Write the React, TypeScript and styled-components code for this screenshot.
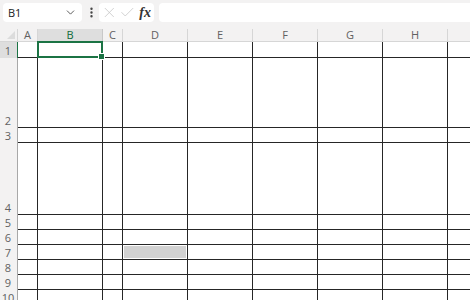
import React from 'react';
import styled, { createGlobalStyle } from 'styled-components';
import { ChevronDown, EllipsisVertical, X, Check } from 'lucide-react';

const GlobalStyle = createGlobalStyle`
  html, body {
    margin: 0;
    padding: 0;
    background: #ffffff;
    font-family: 'Open Sans', 'Noto Sans', 'Liberation Sans', sans-serif;
  }
`;

const Window = styled.div`
  width: 470px;
  height: 300px;
  overflow: hidden;
  background: #f3f2f2;
  display: flex;
  flex-direction: column;
`;

const FormulaBar = styled.div`
  height: 29px;
  flex-shrink: 0;
  display: flex;
  align-items: flex-start;
  padding: 3px 0 0 3px;
  box-sizing: border-box;
`;

const NameBox = styled.div`
  width: 79px;
  height: 19px;
  background: #ffffff;
  border-radius: 4px;
  display: flex;
  align-items: center;
  justify-content: space-between;
  padding: 0 5px 0 5px;
  box-sizing: border-box;
  font-size: 11px;
  color: #222;
`;

const Dots = styled.div`
  width: 16px;
  height: 19px;
  display: flex;
  align-items: center;
  justify-content: center;
  color: #444;
  margin-left: 1px;
`;

const ActionBox = styled.div`
  width: 55px;
  height: 19px;
  background: #ffffff;
  border-radius: 4px;
  display: flex;
  align-items: center;
  padding: 0 3px 0 2px;
  box-sizing: border-box;
  gap: 1px;
  color: #c4c4c4;
`;

const Fx = styled.span`
  font-family: 'Liberation Serif', 'DejaVu Serif', serif;
  font-style: italic;
  font-size: 14px;
  font-weight: 600;
  color: #333;
  margin-left: 3px;
`;

const FormulaInput = styled.div`
  flex: 1;
  height: 19px;
  margin-left: 5px;
  background: #ffffff;
  border-radius: 4px 0 0 4px;
`;

const Sheet = styled.div`
  flex-shrink: 0;
  display: grid;
  grid-template-columns: 18px 20px 65px 20px 65px 65px 65px 65px 65px 65px;
  grid-template-rows: 13px 16px 70px 15px 72px 15px 15px 15px 15px 15px 15px;
  background: #ffffff;
`;

const Corner = styled.div`
  background: #f3f2f2;
  border-right: 1px solid #d6d6d6;
  border-bottom: 1px solid #d6d6d6;
  position: relative;
  &::after {
    content: '';
    position: absolute;
    right: 2px;
    bottom: 2px;
    border-left: 8px solid transparent;
    border-bottom: 8px solid #dcdcdc;
  }
`;

const ColHead = styled.div<{ $active?: boolean }>`
  background: ${(p) => (p.$active ? '#dedede' : '#f3f2f2')};
  color: ${(p) => (p.$active ? '#0f6b3b' : '#616161')};
  border-right: 1px solid ${(p) => (p.$active ? '#c8c8c8' : '#d6d6d6')};
  border-bottom: 1px solid ${(p) => (p.$active ? '#1b7344' : '#d6d6d6')};
  font-size: 11px;
  line-height: 12px;
  text-align: center;
`;

const RowHead = styled.div<{ $active?: boolean }>`
  background: ${(p) => (p.$active ? '#dedede' : '#f3f2f2')};
  color: #616161;
  border-right: 1px solid ${(p) => (p.$active ? '#1b7344' : '#a8a8a8')};
  font-size: 11px;
  line-height: 14px;
  display: flex;
  align-items: flex-end;
  justify-content: center;
  padding-right: 1px;
  box-sizing: border-box;
`;

const Cell = styled.div<{ $fill?: boolean }>`
  border-right: 1px solid #262626;
  border-bottom: 1px solid #262626;
  background: #ffffff;
  position: relative;
  &::before {
    content: '';
    position: absolute;
    inset: 1px;
    background: ${(p) => (p.$fill ? '#d2d2d2' : 'transparent')};
  }
`;

const Selection = styled.div`
  position: absolute;
  inset: -1px;
  border: 2px solid #1b7344;
  z-index: 2;
  &::after {
    content: '';
    position: absolute;
    right: -4px;
    bottom: -4px;
    width: 5px;
    height: 5px;
    background: #1b7344;
    border: 1px solid #ffffff;
  }
`;

const columns = ['A', 'B', 'C', 'D', 'E', 'F', 'G', 'H', ''];
const rows = [1, 2, 3, 4, 5, 6, 7, 8, 9, 10];

const App = () => {
  return (
    <Window>
      <GlobalStyle />
      <FormulaBar>
        <NameBox>
          <span>B1</span>
          <ChevronDown size={13} strokeWidth={1.6} color="#444" />
        </NameBox>
        <Dots>
          <EllipsisVertical size={13} strokeWidth={2.4} />
        </Dots>
        <ActionBox>
          <X size={19} strokeWidth={1.1} />
          <Check size={19} strokeWidth={1.1} />
          <Fx>fx</Fx>
        </ActionBox>
        <FormulaInput />
      </FormulaBar>
      <Sheet>
        <Corner />
        {columns.map((c, i) => (
          <ColHead key={i} $active={c === 'B'}>
            {c}
          </ColHead>
        ))}
        {rows.map((r) => (
          <React.Fragment key={r}>
            <RowHead $active={r === 1}>{r}</RowHead>
            {columns.map((c, i) => (
              <Cell key={i} $fill={c === 'D' && r === 7}>
                {c === 'B' && r === 1 && <Selection />}
              </Cell>
            ))}
          </React.Fragment>
        ))}
      </Sheet>
    </Window>
  );
};

export default App;
